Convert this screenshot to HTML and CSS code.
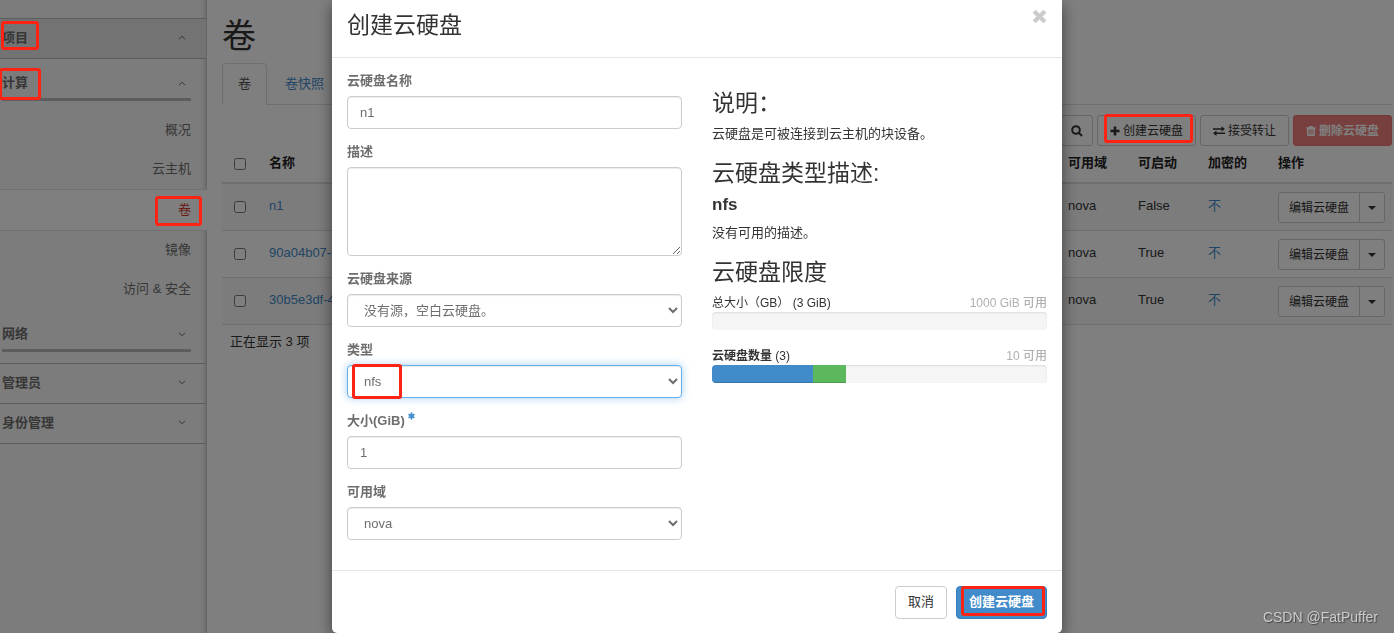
FILE: index.html
```html
<!DOCTYPE html>
<html lang="zh-CN">
<head>
<meta charset="utf-8">
<title>创建云硬盘</title>
<link rel="stylesheet" href="styles.css">
</head>
<body>
<div class="page">
  <nav class="sidebar">
    <div class="sidebar-top"></div>
    <button class="side-head side-head-active" type="button">项目
      <svg class="chev" viewBox="0 0 8 5"><path d="M1 4.2 4 1.2 7 4.2"/></svg></button>
    <div class="side-group">
      <button class="side-sub side-sub-open" type="button">计算
        <svg class="chev" viewBox="0 0 8 5"><path d="M1 4.2 4 1.2 7 4.2"/></svg></button>
      <a class="side-link" href="#">概况</a>
      <a class="side-link" href="#">云主机</a>
      <a class="side-link side-link-current" href="#">卷</a>
      <a class="side-link" href="#">镜像</a>
      <a class="side-link" href="#">访问 &amp; 安全</a>
      <button class="side-sub side-sub-closed" type="button">网络
        <svg class="chev" viewBox="0 0 8 5"><path d="M1 0.8 4 3.8 7 0.8"/></svg></button>
    </div>
    <button class="side-head" type="button">管理员
      <svg class="chev" viewBox="0 0 8 5"><path d="M1 0.8 4 3.8 7 0.8"/></svg></button>
    <button class="side-head" type="button">身份管理
      <svg class="chev" viewBox="0 0 8 5"><path d="M1 0.8 4 3.8 7 0.8"/></svg></button>
  </nav>
  <main class="main">
    <h1 class="page-title">卷</h1>
    <div class="tabs">
      <a class="tab tab-current" href="#">卷</a>
      <a class="tab" href="#">卷快照</a>
    </div>
    <div class="toolbar">
      <button class="btn btn-search" type="button" aria-label="搜索">
        <svg class="icon-search" viewBox="0 0 12 12"><circle cx="5" cy="5" r="3.8"/><path d="M7.8 7.8 11 11"/></svg></button>
      <button class="btn" type="button">
        <svg class="icon" viewBox="0 0 10 10"><path d="M3.7 0.5h2.6v3.2h3.2v2.6H6.3v3.2H3.7V6.3H0.5V3.7h3.2z"/></svg>创建云硬盘</button>
      <button class="btn" type="button">
        <svg class="icon icon-wide" viewBox="0 0 12 10"><path d="M0 2.2h8.5V0.2L12 3 8.5 5.6V3.8H0zM12 6.4H3.5V4.6L0 7.2 3.5 10V8H12z"/></svg>接受转让</button>
      <button class="btn btn-danger" type="button">
        <svg class="icon" viewBox="0 0 10 10"><path fill-rule="evenodd" d="M3.2 0h3.6l.5 1.2H10v1.2H9V9q0 1-1 1H2Q1 10 1 9V2.4H0V1.2h2.7zM2.7 3.5V8.4h.9V3.5zM4.6 3.5V8.4h.9V3.5zM6.5 3.5V8.4h.9V3.5z"/></svg>删除云硬盘</button>
    </div>
    <table class="volumes">
      <colgroup><col class="col-check"><col><col class="col-small"><col class="col-small"><col class="col-small"><col class="col-actions"></colgroup>
      <thead>
        <tr><th><input class="check" type="checkbox" aria-label="全选"></th><th>名称</th><th>可用域</th><th>可启动</th><th>加密的</th><th>操作</th></tr>
      </thead>
      <tbody>
        <tr><td><input class="check" type="checkbox" aria-label="n1"></td><td><a href="#">n1</a></td><td>nova</td><td>False</td><td><a href="#">不</a></td>
          <td><div class="split"><button class="btn" type="button">编辑云硬盘</button><button class="btn btn-caret" type="button" aria-label="更多"><span class="caret"></span></button></div></td></tr>
        <tr><td><input class="check" type="checkbox" aria-label="90a04b07"></td><td><a href="#">90a04b07-</a></td><td>nova</td><td>True</td><td><a href="#">不</a></td>
          <td><div class="split"><button class="btn" type="button">编辑云硬盘</button><button class="btn btn-caret" type="button" aria-label="更多"><span class="caret"></span></button></div></td></tr>
        <tr><td><input class="check" type="checkbox" aria-label="30b5e3df"></td><td><a href="#">30b5e3df-4</a></td><td>nova</td><td>True</td><td><a href="#">不</a></td>
          <td><div class="split"><button class="btn" type="button">编辑云硬盘</button><button class="btn btn-caret" type="button" aria-label="更多"><span class="caret"></span></button></div></td></tr>
      </tbody>
    </table>
    <p class="count">正在显示 3 项</p>
  </main>
</div>

<div class="backdrop">
  <form class="modal">
    <header class="modal-header">
      <h2 class="title">创建云硬盘</h2>
      <button class="close" type="button" aria-label="关闭"><svg viewBox="0 0 14 14"><path d="M2 2 12 12M12 2 2 12"/></svg></button>
    </header>
    <div class="modal-body">
      <div class="fields">
        <label class="label" for="name">云硬盘名称</label>
        <input class="control" id="name" type="text" value="n1">
        <label class="label" for="desc">描述</label>
        <textarea class="control control-area" id="desc"></textarea>
        <label class="label" for="source">云硬盘来源</label>
        <select class="control" id="source"><option>没有源，空白云硬盘。</option></select>
        <label class="label" for="type">类型</label>
        <div class="marked">
          <select class="control control-focus" id="type"><option>nfs</option></select>
          <span class="mark mark-type"></span>
        </div>
        <label class="label" for="size">大小(GiB) <svg class="star" viewBox="0 0 8 8"><path d="M4 0V8M0.6 2 7.4 6M7.4 2 0.6 6"/></svg></label>
        <input class="control" id="size" type="text" value="1">
        <label class="label" for="zone">可用域</label>
        <select class="control" id="zone"><option>nova</option></select>
      </div>
      <div class="info">
        <h3 class="title">说明：</h3>
        <p class="text">云硬盘是可被连接到云主机的块设备。</p>
        <h3 class="title">云硬盘类型描述:</h3>
        <h4 class="type-name">nfs</h4>
        <p class="text">没有可用的描述。</p>
        <h3 class="title">云硬盘限度</h3>
        <div class="quota"><span>总大小（GB） (3 GiB)</span><span class="quota-free">1000 GiB 可用</span></div>
        <div class="bar"></div>
        <div class="quota"><span><strong>云硬盘数量</strong> (3)</span><span class="quota-free">10 可用</span></div>
        <div class="bar"><span class="bar-used" style="width:30%"></span><span class="bar-new" style="width:10%"></span></div>
      </div>
    </div>
    <footer class="modal-footer">
      <button class="action" type="button">取消</button>
      <div class="marked">
        <button class="action action-primary" type="submit">创建云硬盘</button>
        <span class="mark mark-submit"></span>
      </div>
    </footer>
  </form>
</div>
<span class="mark mark-project"></span>
<span class="mark mark-compute"></span>
<span class="mark mark-volume"></span>
<span class="mark mark-create"></span>
<div class="watermark">CSDN @FatPuffer</div>
</body>
</html>
```

FILE: styles.css
```css
* { box-sizing: border-box; }
body {
  margin: 0;
  overflow: hidden;
  background: #fff;
  color: #333;
  font: 13px/18px "Liberation Sans", "Noto Sans CJK SC", sans-serif;
}
button, input, select, textarea { font: inherit; color: inherit; }
a { color: #428bca; text-decoration: none; }
h1, h2, h3, h4, p { margin: 0; font-weight: 400; }

.page { display: flex; min-height: 100vh; }

/* Sidebar */
.sidebar {
  width: 207px;
  flex: none;
  background: #f9f9f9;
  border-right: 1px solid #ccc;
  box-shadow: inset -4px 0 5px -3px #ccc;
}
.sidebar-top { height: 18px; }
.side-head, .side-sub {
  display: flex;
  align-items: center;
  justify-content: space-between;
  border: 0;
  background: none;
  color: #6e6e6e;
  font-weight: 700;
  text-align: left;
}
.side-head {
  width: 100%;
  height: 40px;
  padding: 0 20px 2px 2px;
  border-bottom: 1px solid #bbb;
}
.side-head-active {
  height: 41px;
  background: #e6e6e6;
  border-top: 1px solid #bbb;
}
.chev { width: 8px; height: 5px; fill: none; stroke: #666; stroke-width: 1; }
.side-group { padding-bottom: 11px; border-bottom: 1px solid #bbb; }
.side-sub {
  width: 189px;
  margin-left: 2px;
  padding: 0 5px 6px 0;
  border-bottom: 3px solid #bbb;
}
.side-sub-open { height: 42px; margin-bottom: 10px; padding-top: 15px; }
.side-sub-closed { height: 43px; padding-top: 16px; }
.side-link {
  display: block;
  padding: 10px 15px 11px;
  color: #6e6e6e;
  text-align: right;
}
.side-link-current {
  margin-right: -1px;
  padding: 11px 16px 11px;
  background: #fff;
  border: 1px solid #e0e0e0;
  border-width: 1px 0;
  color: #d0392b;
}

/* Volume list */
.main { flex: 1; min-width: 0; padding: 10px 2px 0 15px; }
.page-title { height: 53px; font-size: 34px; line-height: 52px; }
.tabs { display: flex; gap: 2px; height: 42px; border-bottom: 1px solid #ddd; }
.tab { padding: 11px 15px; border: 1px solid transparent; }
.tab-current {
  height: 42px;
  background: #fff;
  border-color: #ddd #ddd #fff;
  border-radius: 4px 4px 0 0;
  color: #555;
}
.toolbar { display: flex; justify-content: flex-end; gap: 4px; margin-top: 10px; }
.btn {
  display: flex;
  align-items: center;
  height: 31px;
  padding: 0 10px;
  background: #fff;
  border: 1px solid #ccc;
  border-radius: 3px;
  font-size: 12px;
  white-space: nowrap;
}
.toolbar .btn { padding: 0 12px; }
.toolbar .btn-search { padding: 0 9px; }
.btn-danger { background: #ee7e7b; border-color: #e67572; color: #fff; font-weight: 700; }
.icon { width: 10px; height: 10px; margin-right: 3px; fill: currentColor; }
.icon-wide { width: 12px; }
.icon-search { width: 12px; height: 12px; fill: none; stroke: #333; stroke-width: 2; }
.volumes { width: 100%; table-layout: fixed; border-collapse: collapse; }
.col-check { width: 39px; }
.col-small { width: 70px; }
.col-actions { width: 122px; }
.volumes th { height: 37px; padding: 0 8px 2px; border-bottom: 2px solid #ddd; font-weight: 700; text-align: left; color: #222; }
.volumes td { height: 47px; padding: 0 8px 2px; border-bottom: 1px solid #ddd; }
.volumes tbody tr:nth-child(odd) { background: #f9f9f9; }
.check { display: block; width: 12px; height: 12px; margin: 2px 0 0 4px; }
.split { display: flex; margin-top: 4px; }
.split .btn { border-radius: 3px 0 0 3px; }
.split .btn-caret { margin-left: -1px; border-radius: 0 3px 3px 0; padding: 0 8px; }
.caret { border: 4px solid transparent; border-top-color: #333; border-bottom: 0; }
.count { padding: 8px; }

/* Dialog */
.backdrop {
  position: fixed;
  inset: 0;
  display: flex;
  justify-content: center;
  align-items: flex-start;
  background: rgba(0, 0, 0, .5);
}
.modal {
  width: 730px;
  background: #fff;
  border-radius: 0 0 5px 5px;
  box-shadow: 0 5px 15px rgba(0, 0, 0, .5);
}
.modal-header {
  display: flex;
  justify-content: space-between;
  align-items: flex-start;
  padding: 9px 15px 16px;
  border-bottom: 1px solid #e5e5e5;
}
.title { font-size: 23px; line-height: 32px; }
.close { padding: 0; border: 0; background: none; line-height: 0; }
.close svg { width: 15px; height: 15px; fill: none; stroke: #ccc; stroke-width: 4; }
.modal-body { display: grid; grid-template-columns: 1fr 1fr; gap: 30px; padding: 14px 15px 30px; }
.fields { display: flex; flex-direction: column; color: #6e6e6e; }
.label { height: 18px; margin-bottom: 6px; font-weight: 700; }
.control {
  display: block;
  width: 100%;
  height: 33px;
  margin: 0 0 14px;
  padding: 6px 12px;
  background-color: #fff;
  border: 1px solid #ccc;
  border-radius: 4px;
  box-shadow: inset 0 1px 1px rgba(0, 0, 0, .08);
}
.fields > .control:last-child { margin-bottom: 0; }
.control-area { height: 89px; resize: vertical; }
.control-focus { border-color: #66afe9; box-shadow: inset 0 1px 1px rgba(0, 0, 0, .08), 0 0 8px rgba(102, 175, 233, .6); }
.star { width: 7px; height: 8px; vertical-align: 5px; fill: none; stroke: #428bca; stroke-width: 2; }
.info { padding-top: 15px; }
.info .title { margin-bottom: 6px; }
.text { margin-bottom: 14px; }
.type-name { margin-bottom: 9px; font-size: 17px; font-weight: 700; line-height: 20px; }
.quota { display: flex; justify-content: space-between; font-size: 12px; }
.quota strong { font-weight: 700; }
.quota-free { color: #b0b0b0; font-weight: 500; }
.bar {
  display: flex;
  height: 18px;
  margin-bottom: 17px;
  overflow: hidden;
  background: #f5f5f5;
  border-radius: 4px;
  box-shadow: inset 0 1px 2px rgba(0, 0, 0, .1);
}
.bar-used, .bar-new { box-shadow: inset 0 -1px 0 rgba(0, 0, 0, .15); }
.bar-used { background: #428bca; }
.bar-new { background: #5cb85c; }
.modal-footer {
  display: flex;
  justify-content: flex-end;
  gap: 9px;
  padding: 15px 15px 14px;
  border-top: 1px solid #e5e5e5;
}
.action {
  height: 33px;
  padding: 0 12px 2px;
  background: #fff;
  border: 1px solid #ccc;
  border-radius: 4px;
}
.action-primary { background: #428bca; border-color: #357ebd; color: #fff; font-weight: 700; }

/* Highlight frames laid over the page */
.marked { position: relative; }
.mark { position: absolute; border: 3px solid #ff2314; border-radius: 3px; pointer-events: none; }
.mark-type { left: 5px; top: -1px; width: 50px; height: 35px; }
.mark-submit { inset: 0 2px 3px 5px; }
.mark-project { left: 1px; top: 21px; width: 38px; height: 29px; }
.mark-compute { left: -1px; top: 68px; width: 42px; height: 32px; }
.mark-volume { left: 155px; top: 196px; width: 47px; height: 30px; }
.mark-create { right: 201px; top: 114px; width: 89px; height: 29px; }
.watermark {
  position: fixed;
  right: 16px;
  bottom: 7px;
  color: #ccc;
  font: 14px/18px "Liberation Sans", sans-serif;
  text-shadow: 1px 1px 1px #444;
}
```
